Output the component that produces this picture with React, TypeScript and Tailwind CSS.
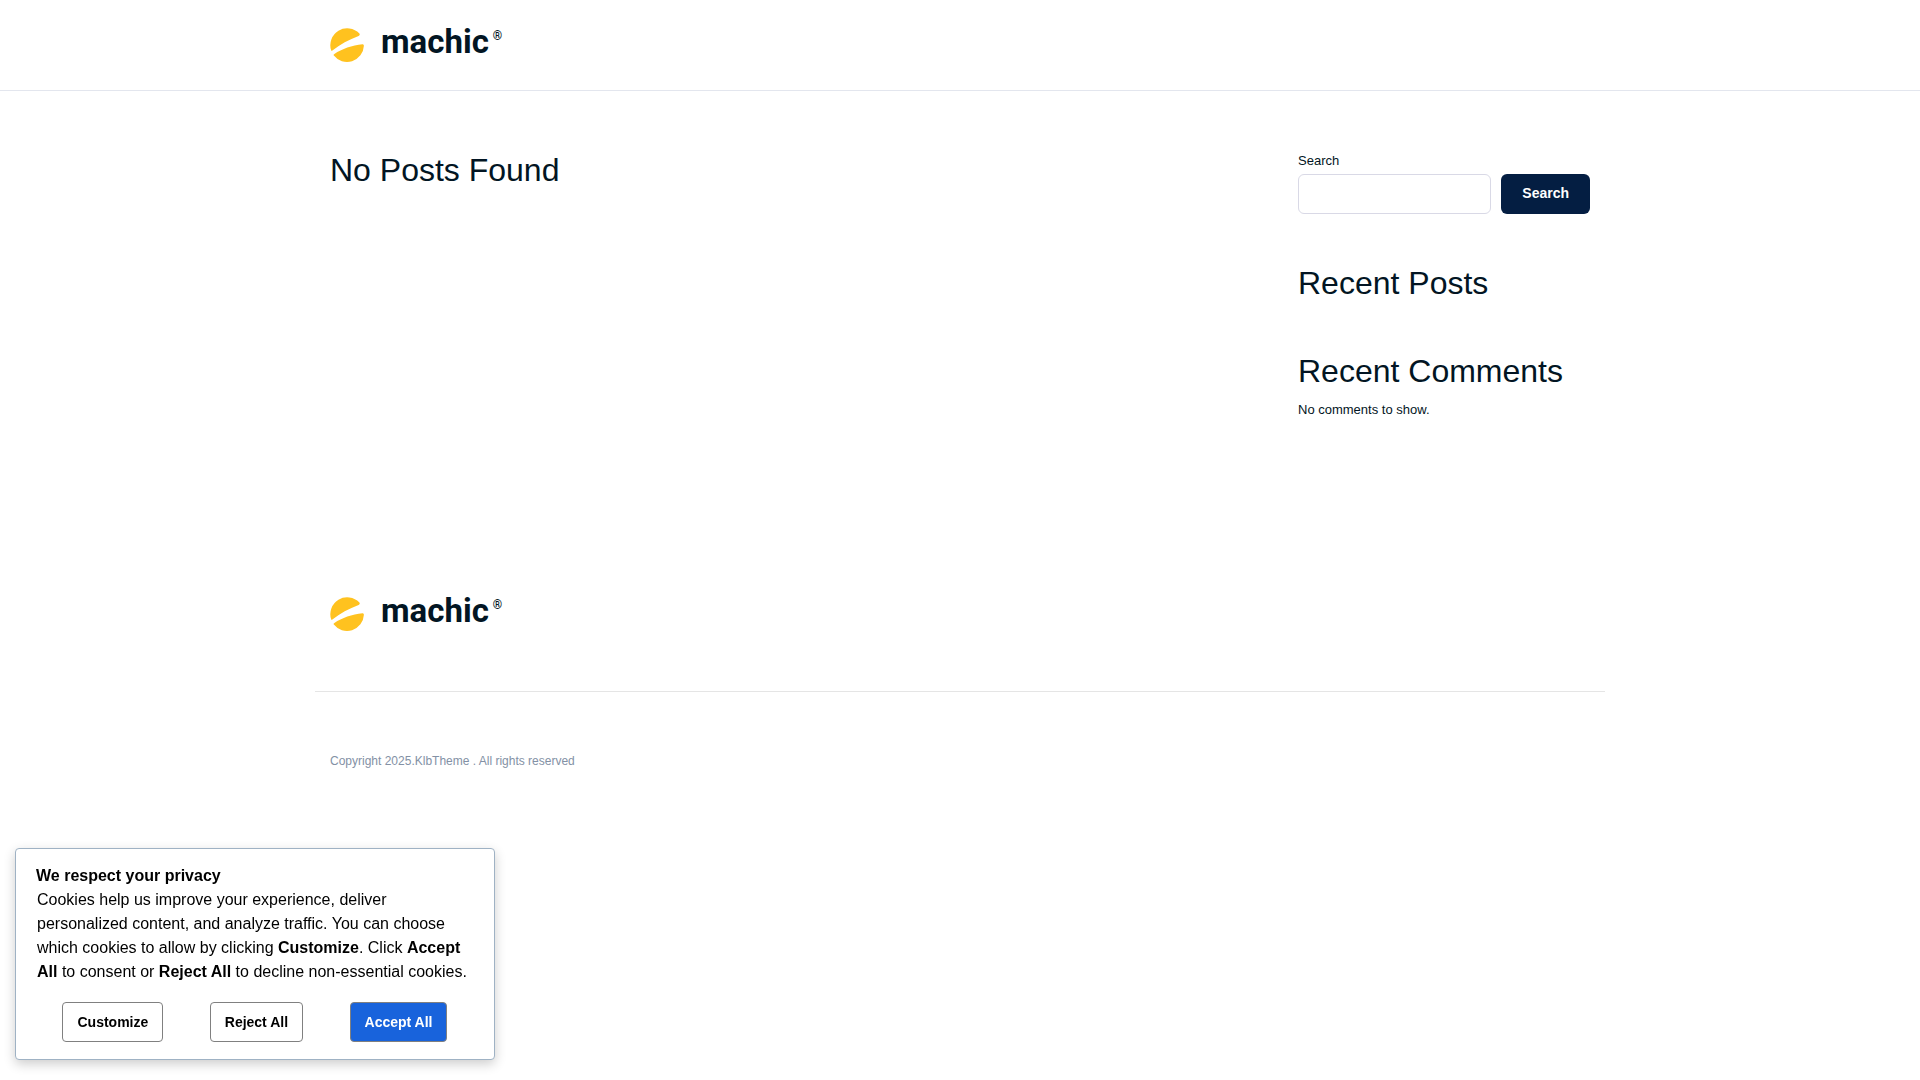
import { useState } from 'react';

function Logo() {
  return (
    <a href="#" className="flex w-fit h-[34px] items-start gap-[17px]">
      <svg className="w-[34px] h-[34px]" viewBox="0 0 34 34" aria-hidden="true">
        <path fill="#ffc21f" d="M1.2 22.6A16.9 16.9 0 0 1 29.4 5.5Q30.4 7.2 28.6 8C19 11.5 10 16.500 2.4 22.4Q1.5 23.2 1.2 22.6Z" />
        <path fill="#ffc21f" d="M33.9 17.8A16.9 16.9 0 0 1 3.600 27.3Q3.4 26.5 4.4 25.9C12 21 22 17.200 32.6 16.3Q33.9 16.2 33.9 17.8Z" />
      </svg>
      <span className="flex items-start gap-1 text-[#021523]">
        <span className="font-[Roboto,sans-serif] text-[33px] leading-[28px] font-bold">machic</span>
        <span className="font-[Roboto,sans-serif] text-[12px] leading-4 font-bold">®</span>
      </span>
    </a>
  );
}

export default function App() {
  const [query, setQuery] = useState('');

  return (
    <div className="min-h-screen bg-white text-[#021523] font-['Liberation_Sans',Arial,sans-serif]">
      {/* Header */}
      <header className="border-b border-[#e3e6ee]">
        <div className="max-w-[1290px] mx-auto px-[15px] py-7">
          <Logo />
        </div>
      </header>

      {/* Content */}
      <div className="max-w-[1290px] mx-auto px-[15px] pt-[60px] pb-[177px] flex flex-wrap justify-between gap-10">
        <main>
          <h1 className="text-[32px] leading-[38px]">No Posts Found</h1>
        </main>

        <aside className="w-[292px] space-y-[50px]">
          <form role="search" onSubmit={(e) => e.preventDefault()}>
            <label htmlFor="search" className="block text-[13px] leading-5 mb-[3px]">Search</label>
            <div className="flex gap-[10px]">
              <input
                id="search"
                type="search"
                value={query}
                onChange={(e) => setQuery(e.target.value)}
                className="flex-1 min-w-0 h-10 px-3 border border-[#d9d9e6] rounded-md text-sm"
              />
              <button type="submit" className="h-10 px-[21px] pb-[2px] rounded-md bg-[#041e42] text-white text-sm font-bold">
                Search
              </button>
            </div>
          </form>

          <section>
            <h2 className="text-[32px] leading-[38px]">Recent Posts</h2>
          </section>

          <section>
            <h2 className="text-[32px] leading-[38px] mb-[10px]">Recent Comments</h2>
            <p className="text-[13px] leading-5">No comments to show.</p>
          </section>
        </aside>
      </div>

      {/* Footer */}
      <footer className="max-w-[1290px] mx-auto">
        <div className="px-[15px] pb-[60px] border-b border-[#e5e5e5]">
          <Logo />
        </div>
        <p className="px-[15px] py-[60px] text-xs leading-[18px] text-[#8391a5]">
          Copyright 2025.KlbTheme . All rights reserved
        </p>
      </footer>

      {/* Cookie consent */}
      <section
        aria-labelledby="consent-title"
        className="fixed left-[15px] bottom-5 w-[480px] max-w-full pt-[15px] pb-[17px] bg-white text-black border border-[#9fb2c4] rounded-[4px] shadow-[0_4px_12px_rgba(0,0,0,0.2)]"
      >
        <h2 id="consent-title" className="px-5 text-base leading-6 font-bold">We respect your privacy</h2>
        <p className="px-[21px] text-base leading-6 mb-[18px]">
          Cookies help us improve your experience, deliver personalized content, and analyze traffic. You can choose
          which cookies to allow by clicking <strong>Customize</strong>. Click <strong>Accept All</strong> to consent
          or <strong>Reject All</strong> to decline non-essential cookies.
        </p>
        <div className="flex justify-evenly">
          <button type="button" className="h-10 px-[14px] border border-[#808080] rounded-[4px] text-sm font-bold">
            Customize
          </button>
          <button type="button" className="h-10 px-[14px] border border-[#808080] rounded-[4px] text-sm font-bold">
            Reject All
          </button>
          <button type="button" className="h-10 px-[14px] border border-[#808080] rounded-[4px] bg-[#1863dc] text-white text-sm font-bold">
            Accept All
          </button>
        </div>
      </section>
    </div>
  );
}
